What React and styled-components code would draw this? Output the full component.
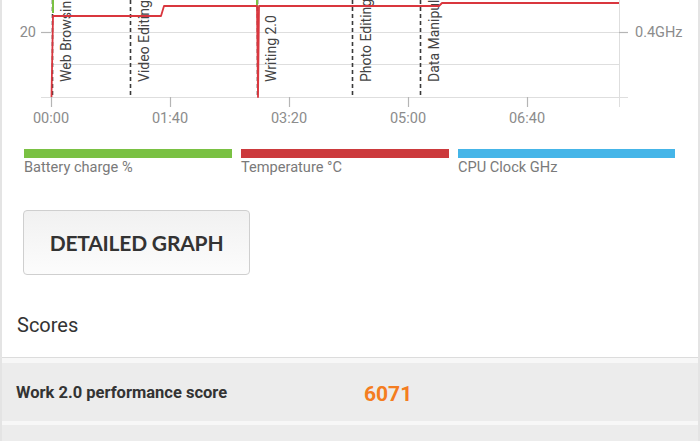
import styled, { createGlobalStyle } from "styled-components";

const GlobalStyle = createGlobalStyle`
  html, body {
    margin: 0;
    padding: 0;
    background: #e9e9e9;
  }
  body {
    font-family: Roboto, "Liberation Sans", sans-serif;
  }
`;

const markers = [
  { x: 52, label: "Web Browsing" },
  { x: 130, label: "Video Editing" },
  { x: 257, label: "Writing 2.0" },
  { x: 352, label: "Photo Editing" },
  { x: 420, label: "Data Manipulation" },
];

const xTicks = [
  { x: 51, label: "00:00" },
  { x: 170, label: "01:40" },
  { x: 289, label: "03:20" },
  { x: 408, label: "05:00" },
  { x: 527, label: "06:40" },
];

const legend = [
  { color: "#7ac143", label: "Battery charge %" },
  { color: "#cc3a3d", label: "Temperature °C" },
  { color: "#45b5e8", label: "CPU Clock GHz" },
];

const scores = [{ name: "Work 2.0 performance score", value: "6071" }];

const Chart = () => (
  <ChartSvg viewBox="2 0 696 140" width="696" height="140">
    {/* grid */}
    <g stroke="#dedede" strokeWidth="1">
      <line x1="51" y1="32.5" x2="619" y2="32.5" />
      <line x1="51" y1="64.5" x2="619" y2="64.5" />
      <line x1="41" y1="97.5" x2="628" y2="97.5" />
      <line x1="619.5" y1="0" x2="619.5" y2="107" />
    </g>
    <g stroke="#b5b5b5" strokeWidth="1.2">
      <line x1="41" y1="32.5" x2="51" y2="32.5" />
      <line x1="619" y1="32.5" x2="628" y2="32.5" />
      {xTicks.map((t) => (
        <line key={t.label} x1={t.x + 0.5} y1="97" x2={t.x + 0.5} y2="107" />
      ))}
    </g>

    {/* workload markers */}
    {markers.map((m) => (
      <g key={m.label}>
        <line
          x1={m.x + 0.5}
          y1="0"
          x2={m.x + 0.5}
          y2="97"
          stroke="#3a3a3a"
          strokeWidth="1.6"
          strokeDasharray="4 3"
        />
        <MarkerText transform={`translate(${m.x + 19} 82) rotate(-90)`}>
          {m.label}
        </MarkerText>
      </g>
    ))}

    {/* battery */}
    <g stroke="#7ac143" strokeWidth="2" fill="none">
      <path d="M53 -2 L53 13" />
      <path d="M257 -2 L257 7" />
    </g>

    {/* temperature */}
    <path
      d="M51.5 97 L53 16 L161 16 L164 6 L257 6 L258 97 L259 6 L439 6 L442 3 L619 3"
      stroke="#d9363e"
      strokeWidth="1.8"
      fill="none"
      strokeLinejoin="round"
    />

    <AxisText x="36" y="37" textAnchor="end">
      20
    </AxisText>
    <AxisText x="635" y="37">
      0.4GHz
    </AxisText>
    {xTicks.map((t) => (
      <AxisText key={t.label} x={t.x} y="123" textAnchor="middle">
        {t.label}
      </AxisText>
    ))}
  </ChartSvg>
);

const App = () => (
  <>
    <GlobalStyle />
    <Page>
      <Card>
        <Chart />
        <Legend>
          {legend.map((l) => (
            <LegendItem key={l.label}>
              <LegendBar color={l.color} />
              <LegendLabel>{l.label}</LegendLabel>
            </LegendItem>
          ))}
        </Legend>
        <DetailButton>DETAILED GRAPH</DetailButton>
        <SectionTitle>Scores</SectionTitle>
      </Card>
      <ScoreList>
        {scores.map((s) => (
          <ScoreRow key={s.name}>
            <ScoreName>{s.name}</ScoreName>
            <ScoreValue>{s.value}</ScoreValue>
          </ScoreRow>
        ))}
        <ScoreRow />
      </ScoreList>
    </Page>
  </>
);

const Page = styled.div`
  width: 700px;
  height: 441px;
  overflow: hidden;
  box-sizing: border-box;
  padding: 0 2px;
  background: #e4e4e4;
`;

const Card = styled.div`
  background: #fff;
  border-bottom: 1px solid #dcdcdc;
  padding-bottom: 20px;
`;

const ChartSvg = styled.svg`
  display: block;
  overflow: hidden;
`;

const MarkerText = styled.text`
  font-family: Roboto, "Liberation Sans", sans-serif;
  font-size: 14px;
  fill: #444;
`;

const AxisText = styled.text`
  font-family: Roboto, "Liberation Sans", sans-serif;
  font-size: 14.5px;
  fill: #8c8c8c;
`;

const Legend = styled.div`
  display: grid;
  grid-template-columns: 208px 208px 217px;
  column-gap: 9px;
  padding: 0 22px;
  margin-top: 9px;
`;

const LegendItem = styled.div`
  display: flex;
  flex-direction: column;
`;

const LegendBar = styled.div`
  height: 9px;
  background: ${(p) => p.color};
`;

const LegendLabel = styled.span`
  margin-top: 1px;
  font-size: 14.6px;
  line-height: 17px;
  color: #7a7a7a;
`;

const DetailButton = styled.button`
  display: block;
  margin: 34px 0 0 21px;
  width: 227px;
  height: 65px;
  border: 1px solid #cfcfcf;
  border-radius: 4px;
  background: linear-gradient(#f1f1f1, #fcfcfc);
  font-family: Lato, "Liberation Sans", sans-serif;
  font-weight: 700;
  font-size: 21px;
  color: #333;
  letter-spacing: -0.2px;
  cursor: pointer;
`;

const SectionTitle = styled.h2`
  margin: 38px 0 0 15px;
  font-family: Roboto, "Liberation Sans", sans-serif;
  font-weight: 400;
  font-size: 20px;
  line-height: 24px;
  color: #333;
`;

const ScoreList = styled.div`
  display: flex;
  flex-direction: column;
  gap: 4px;
  padding-top: 5px;
  background: #f7f7f7;
`;

const ScoreRow = styled.div`
  display: flex;
  align-items: center;
  height: 58px;
  padding: 0 14px;
  background: #ececec;
`;

const ScoreName = styled.span`
  width: 348px;
  font-size: 16.5px;
  font-weight: 700;
  color: #333;
`;

const ScoreValue = styled.span`
  margin-top: 4px;
  font-size: 21px;
  font-weight: 700;
  color: #f47d20;
`;

export default App;
